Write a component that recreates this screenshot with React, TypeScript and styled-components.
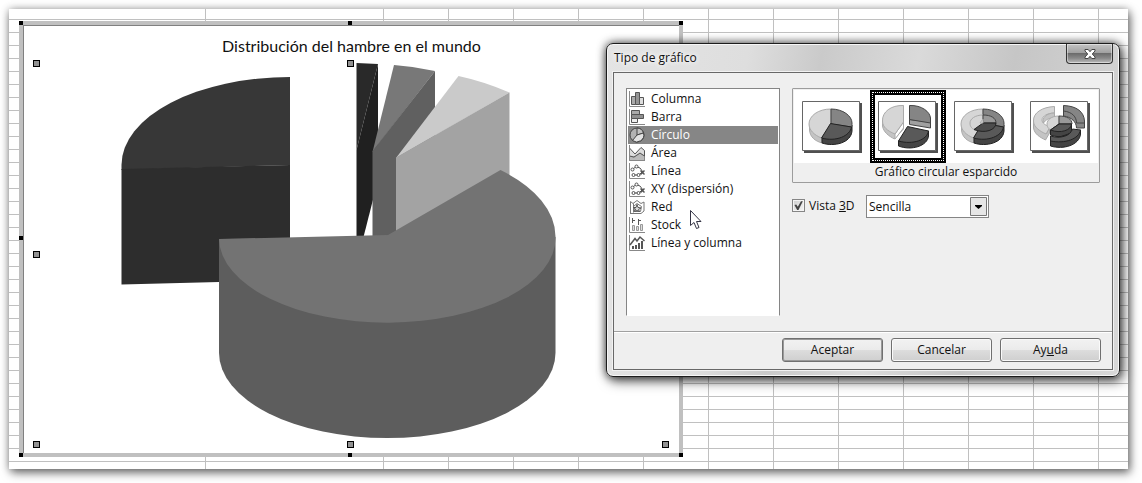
import React, { useState } from "react";
import styled, { createGlobalStyle } from "styled-components";

const Global = createGlobalStyle`
  * { box-sizing: border-box; }
  body {
    margin: 0;
    padding: 9px 14px 14px 9px;
    background: #fff;
    font: 12px/18px "Segoe UI", "Open Sans", "Noto Sans", sans-serif;
    color: #111;
  }
`;

const Sheet = styled.main`
  position: relative;
  height: 460px;
  min-height: calc(100vh - 23px);
  background-color: #fff;
  background-image:
    linear-gradient(90deg, transparent 196px, #c0c0c0 196px, #c0c0c0 197px, transparent 197px),
    repeating-linear-gradient(180deg, transparent 0 10px, #c0c0c0 10px 11px, transparent 11px 13px);
  box-shadow: 0 0 8px rgba(0, 0, 0, 0.3), 2px 4px 9px rgba(0, 0, 0, 0.5);
`;

const Columns = styled.div`
  height: 100%;
  margin-left: 374px;
  background: repeating-linear-gradient(90deg, #c0c0c0 0 1px, transparent 1px 65px);
`;

const ChartObject = styled.section`
  position: absolute;
  left: 10px;
  top: 12px;
  width: 664px;
  height: 436px;
  border: 4px solid #c0c0c0;
  background: #fff;
`;

const ChartBody = styled.div`
  height: 100%;
  border-top: 1px solid #808080;
  border-left: 1px solid #808080;
  overflow: hidden;
`;

const ChartTitle = styled.h1`
  margin: 10px 0 0;
  font: 16px/20px "Comic Sans MS", Lato, sans-serif;
  text-align: center;
`;

const ChartDrawing = styled.svg`
  position: absolute;
  left: -4px;
  top: -4px;
`;

const Dialog = styled.section`
  position: absolute;
  left: 597px;
  top: 34px;
  width: 514px;
  display: flex;
  flex-direction: column;
  padding: 0 6px 6px;
  border: 1px solid #1c1c1c;
  border-radius: 7px;
  background: linear-gradient(100deg, #e4e4e4 0, #dedede 25%, #cacaca 38%, #dadada 55%, #c6c6c6 72%, #d8d8d8 100%);
  box-shadow: inset 0 0 0 1px #f6f6f6, 0 0 10px rgba(0, 0, 0, 0.75), 3px 5px 12px rgba(0, 0, 0, 0.5);
`;

const TitleBar = styled.header`
  display: flex;
  justify-content: space-between;
  align-items: flex-start;
  height: 28px;
  padding-left: 1px;
`;

const DialogTitle = styled.h2`
  margin: 5px 0 0;
  font: inherit;
  text-shadow: 0 0 6px #fff, 0 0 6px #fff;
`;

const CloseButton = styled.button`
  width: 47px;
  height: 20px;
  padding: 0;
  display: flex;
  justify-content: center;
  align-items: center;
  border: 1px solid #333;
  border-top: 0;
  border-radius: 0 0 4px 4px;
  background: linear-gradient(#c4c4c4 0, #a2a2a2 45%, #6c6c6c 50%, #8a8a8a 75%, #bcbcbc 100%);
  box-shadow: inset 0 0 0 1px rgba(255, 255, 255, 0.45);
`;

const Client = styled.div`
  border: 1px solid #686868;
  background: #efefef;
  box-shadow: 0 0 0 1px #f2f2f2;
`;

const Content = styled.div`
  display: flex;
  gap: 12px;
  padding: 15px 12px;
`;

const TypeList = styled.ul`
  width: 154px;
  height: 228px;
  margin: 0;
  padding: 1px;
  list-style: none;
  border: 1px solid #858585;
  border-bottom-color: #fff;
  background: #fff;
`;

const TypeButton = styled.button<{ $on: boolean }>`
  width: 100%;
  height: 18px;
  display: flex;
  align-items: center;
  gap: 6px;
  padding: 0 1px;
  border: 0;
  font: inherit;
  color: ${(p) => (p.$on ? "#fff" : "#111")};
  background: ${(p) => (p.$on ? "#868686" : "transparent")};
`;

const Options = styled.div`
  flex: 1;
  display: flex;
  flex-direction: column;
  gap: 12px;
`;

const Gallery = styled.fieldset`
  margin: 0;
  padding: 1px;
  border: 1px solid #9c9c9c;
  border-radius: 1px;
`;

const Thumbs = styled.div`
  display: flex;
  background: #fff;
`;

const Thumb = styled.button<{ $on: boolean }>`
  flex: none;
  width: 25%;
  height: 73px;
  display: flex;
  justify-content: center;
  align-items: center;
  padding: 0;
  border: ${(p) => (p.$on ? "5px solid #000" : "0")};
  outline: ${(p) => (p.$on ? "1px dotted #fff" : "0")};
  outline-offset: -3px;
  background: #fff;
`;

const Caption = styled.p`
  margin: 0;
  text-align: center;
`;

const ViewRow = styled.div`
  display: flex;
  height: 23px;
`;

const CheckLabel = styled.label`
  display: flex;
  align-items: center;
  gap: 4px;
  width: 74px;
  height: 21px;
`;

const Check = styled.input`
  appearance: none;
  width: 13px;
  height: 13px;
  margin: 0;
  display: grid;
  place-items: center;
  border: 1px solid #858585;
  background: linear-gradient(135deg, #cfcfcf, #f6f6f6);
  box-shadow: inset 0 0 0 1px #f4f4f4;
  &:checked::before {
    content: "";
    width: 9px;
    height: 9px;
    background: #444;
    clip-path: polygon(5% 45%, 25% 40%, 42% 65%, 78% 2%, 98% 2%, 50% 100%, 35% 100%);
  }
`;

const SelectBox = styled.div`
  position: relative;
  width: 123px;
`;

const Select = styled.select`
  appearance: none;
  width: 100%;
  height: 23px;
  padding: 0 20px 0 2px;
  border: 1px solid #858585;
  border-radius: 0;
  background: #fff;
  color: #111;
  font: inherit;
`;

const Arrow = styled.svg`
  position: absolute;
  right: 2px;
  top: 2px;
  pointer-events: none;
`;

const Footer = styled.footer`
  display: flex;
  justify-content: flex-end;
  gap: 8px;
  padding: 6px 11px 7px;
  border-top: 1px solid #a0a0a0;
  box-shadow: inset 0 1px #fff;
`;

const PushButton = styled.button<{ $main?: boolean }>`
  width: 101px;
  height: 24px;
  padding: 0 0 1px;
  border: 1px solid #707070;
  border-radius: 3px;
  background: linear-gradient(#f2f2f2 0, #ebebeb 49%, #dddddd 50%, #cfcfcf 100%);
  box-shadow: inset 0 0 0 1px ${(p) => (p.$main ? "#999" : "#fafafa")};
  color: #111;
  font: inherit;
`;

const Pointer = styled.svg`
  position: absolute;
  left: 680px;
  top: 200px;
  pointer-events: none;
`;

const ink = "#555";

const axis = <path d="M.5 0V15.500H16" fill="none" stroke="#888" />;

const points = (
  <g fill="#fff" stroke={ink}>
    {axis}
    <path d="M3 7L7 3.500L11 5L14 9M5 12H10L14 8" fill="none" />
    <circle cx="3.500" cy="6.500" r="1.500" />
    <circle cx="7.500" cy="3.500" r="1.500" />
    <circle cx="4.500" cy="12" r="1.500" />
    <circle cx="9.500" cy="12" r="1.500" />
    <path d="M11.500 7.500l4 4M15.500 7.500l-4 4" strokeWidth="1.500" />
  </g>
);

const types: { name: string; icon: React.ReactNode }[] = [
  {
    name: "Columna",
    icon: (
      <g stroke={ink} fill="#aaa">
        {axis}
        <path d="M2.500 5.500h4v8h-4z" />
        <path d="M6.500 1.500h4v12h-4z" fill="#959595" />
        <path d="M10.500 6.500h4v7h-4z" fill="#ddd" />
      </g>
    ),
  },
  {
    name: "Barra",
    icon: (
      <g stroke={ink} fill="#aaa">
        {axis}
        <path d="M2.500 1.500h8v4h-8z" />
        <path d="M2.500 5.500h12v4h-12z" fill="#909090" />
        <path d="M2.500 9.500h6v4h-6z" fill="#eee" />
      </g>
    ),
  },
  {
    name: "Círculo",
    icon: (
      <g stroke="#444">
        <circle cx="8" cy="8" r="7" fill="#b2b2b2" />
        <path d="M8 8V1A7 7 0 0 1 14.500 6Z" fill="#c2c2c2" />
        <path d="M8 8L14.500 6A7 7 0 0 1 3.500 13.500Z" fill="#e2e2e2" />
      </g>
    ),
  },
  {
    name: "Área",
    icon: (
      <g stroke={ink}>
        <path d="M.5 11L5 12L11 8L15.500 11V15.500H.5Z" fill="#bbb" stroke="#888" />
        <path d="M.5 3L6 9L12 2.500L15.500 5.500V11L11 8L5 12L.5 11Z" fill="#ddd" />
        {axis}
      </g>
    ),
  },
  { name: "Línea", icon: points },
  { name: "XY (dispersión)", icon: points },
  {
    name: "Red",
    icon: (
      <g stroke="#777" fill="none">
        <path d="M1.500 15V2.500L4 4.500L8 1.500L12 4.500L15 3V12L12 14.500H2" />
        <path d="M4.500 4.500V13.500M8 4.500L12.500 7.500L11.500 12.500H5.500L4.500 7.500Z" />
        <path d="M8 5.500L9 8.500L12 9L9.500 10.500L10.500 12.500L8 11.500L5.500 12.500L6.500 10L4.500 8.500L7 8.500Z" fill="#ddd" stroke={ink} />
      </g>
    ),
  },
  {
    name: "Stock",
    icon: (
      <g stroke={ink} fill="#ddd">
        {axis}
        <path d="M3.500 1v5M3.500 3.500H6M9.500 2v6M9.500 3.500H12" fill="none" />
        <path d="M3.500 8.500h2v5h-2zM7.500 9.500h2v4h-2zM11.500 7.500h2v6h-2z" stroke="#999" />
      </g>
    ),
  },
  {
    name: "Línea y columna",
    icon: (
      <g stroke={ink} fill="none">
        {axis}
        <path d="M1 10L6 3.500L8 6L11 2L15.500 6" strokeWidth="1.500" />
        <path d="M4 14v-3M7 14v-4M10 14V8M13 14V6" strokeWidth="2" />
      </g>
    ),
  },
];

const light = { fill: "#d6d6d6", stroke: "#aaa" };
const lightSide = { fill: "#c4c4c4", stroke: "#aaa" };
const mid = { fill: "#858585", stroke: "#444" };
const dark = { fill: "#595959", stroke: "#222" };
const darkSide = { fill: "#444", stroke: "#222" };

const variants: { name: string; art: React.ReactNode }[] = [
  {
    name: "Gráfico circular",
    art: (
      <>
        <path {...lightSide} d="M7.500 23v6C8 36 13 40 20 42v-7Z" />
        <path {...darkSide} d="M20 35v7c12 4 29 0 30-12v-6Z" />
        <path {...light} d="M29 23V8C16 8 7 15 7 23c0 6 5 11 12.500 14Z" />
        <path {...mid} d="M29 23V8C41 8 50 15 50 22c0 2 0 3-.5 4Z" />
        <path {...dark} d="M28.500 22.500L49.500 26C48 35 34 41 19.500 37Z" />
      </>
    ),
  },
  {
    name: "Gráfico circular esparcido",
    art: (
      <>
        <path {...lightSide} d="M4.500 20v5c1 6 6 10 12 13l9-10V5Z" />
        <path d="M17 38V33L25.500 21v6Z" fill="#fff" stroke="#aaa" />
        <path {...light} d="M25.500 4.500C13 4 4 11 4.500 20c0 6 5 10 12.500 13l8.500-12Z" />
        <path {...mid} fill="#a0a0a0" d="M31.500 18.500v5l21 3.500v-6Z" />
        <path {...mid} d="M31.500 4.500C44 4 52 11 52.500 17v5l-21-3.500Z" />
        <path {...darkSide} d="M20.500 40v5c13 5 29 0 30-10v-5Z" />
        <path {...dark} d="M29.500 25.500l21 4.500C49 39 35 44 20.500 40Z" />
      </>
    ),
  },
  {
    name: "Gráfico de rosquilla",
    art: (
      <>
        <path {...lightSide} d="M7.500 23v6C8 36 13 40 20 42v-7Z" />
        <path {...darkSide} d="M20 35v7c12 4 29 0 30-12v-6Z" />
        <path {...light} d="M29 22V8C16 8 7 15 7 23c0 6 5 11 12.500 14Z" />
        <path {...mid} d="M29 22V8C41 8 50 15 50 22c0 2 0 3-.5 4Z" />
        <path {...dark} d="M28.500 22L49.500 26C48 35 34 41 19.500 37Z" />
        <path {...light} d="M29 22v-8c-8 0-13 4-13 8 0 4 2 6 7 8Z" />
        <path {...mid} fill="#999" d="M29 22v-8c8 0 13 3 13 8Z" />
        <path {...darkSide} fill="#4c4c4c" d="M29 22h13c0 7-11 11-22 6.500Z" />
        <path {...lightSide} fill="#ddd" d="M26 22l3-4v4Z" />
      </>
    ),
  },
  {
    name: "Rosquilla esparcida",
    art: (
      <>
        <path {...lightSide} d="M3.500 20v7c1 6 6 9 12 12l4-7v-6l-3 7Z" />
        <path {...light} d="M24.500 5.500C12 6 3 12 3.500 20c0 6 6 10 12.500 13l4-7c-5-2-8-4-8-7 0-4 6-7 12.500-7Z" />
        <path {...lightSide} d="M24.500 12v5c-6 0-9 2-11 5c-2-5 3-10 11-10Z" />
        <path {...light} d="M29 15c-8 0-12 4-12 8s3 6 6 7l6-6Z" />
        <path {...mid} fill="#999" d="M29 15c8 0 13 3 13 8l-13 2Z" />
        <path {...darkSide} d="M20.500 29v5c10 4 21 0 21-5v-6H29Z" />
        <path {...dark} d="M29 23h12.500c0 6-11 10-21 6Z" />
        <path {...mid} d="M33.500 4.500C47 5 54 11 54.500 20v7h-8c0-6-5-11-13-12Z" />
        <path {...mid} fill="none" d="M33.500 10c9 1 13 6 13 12h8" />
        <path {...darkSide} d="M20.500 39v6c13 4 29-1 30-12v-4Z" />
        <path {...dark} d="M20.500 35c10 3 20 0 22-7l8 1C49 38 35 43 20.500 40Z" />
      </>
    ),
  },
];

const frameHandles = [
  [19, 21], [348, 21], [679, 21],
  [19, 236], [679, 236],
  [19, 453], [348, 453], [679, 453],
];
const plotHandles = [
  [33, 60], [347, 60], [33, 251], [33, 441], [347, 441], [662, 441],
];

const PieChart = () => (
  <ChartDrawing width="664" height="436" viewBox="19 21 664 436" role="img" aria-label="Distribución del hambre en el mundo">
    <path fill="#373737" d="M290 165V77A168.500 88 0 0 0 121.500 165V170Z" />
    <path fill="#2d2d2d" d="M121.500 169L290 165V260L219 282L121.500 284.500Z" />
    <path fill="#292929" d="M356.500 63L378 64L356.500 150Z" />
    <path fill="#202020" d="M378 64V180L363.500 237H356.500V150Z" />
    <path fill="#787878" d="M394 65Q415 66.500 435 71L372.500 152Z" />
    <path fill="#606060" d="M435 71V160L396 237H372.500V151Z" />
    <path fill="#cacaca" d="M458.500 76Q484 81.500 509.500 92.500L396 158Z" />
    <path fill="#a3a3a3" d="M509.500 92.500V200L396 237V157.500Z" />
    <path fill="#5d5d5d" d="M219 239V353A168 85 0 0 0 555.500 353V237Z" />
    <path fill="#737373" d="M219 239L388 235L500.500 170A168.500 90 0 0 1 555.500 237A168 84.500 0 0 1 219 239Z" />
    <g shapeRendering="crispEdges">
      {frameHandles.map(([x, y]) => (
        <rect key={`${x}-${y}`} x={x} y={y} width="4" height="4" />
      ))}
      {plotHandles.map(([x, y]) => (
        <g key={`${x}-${y}`}>
          <rect x={x} y={y} width="7" height="7" />
          <rect x={x + 1} y={y + 1} width="5" height="5" fill="#929292" />
        </g>
      ))}
    </g>
  </ChartDrawing>
);

export default function App() {
  const [type, setType] = useState(2);
  const [variant, setVariant] = useState(1);
  return (
    <>
      <Global />
      <Sheet>
        <Columns />
        <ChartObject>
          <ChartBody>
            <ChartTitle>Distribución del hambre en el mundo</ChartTitle>
          </ChartBody>
          <PieChart />
        </ChartObject>
        <Dialog role="dialog" aria-labelledby="dialog-title">
          <TitleBar>
            <DialogTitle id="dialog-title">Tipo de gráfico</DialogTitle>
            <CloseButton aria-label="Cerrar">
              <svg width="12" height="10" viewBox="0 0 12 10">
                <path d="M1 .5h3.200L6 2.700L7.800.5H11v1.500L8.300 5L11 8v1.500H7.800L6 7.300L4.200 9.500H1V8L3.700 5L1 2Z" fill="#fff" stroke="#444" />
              </svg>
            </CloseButton>
          </TitleBar>
          <Client>
            <Content>
              <TypeList>
                {types.map((t, i) => (
                  <li key={t.name}>
                    <TypeButton $on={i === type} onClick={() => setType(i)}>
                      <svg width="16" height="16" viewBox="0 0 16 16">{t.icon}</svg>
                      {t.name}
                    </TypeButton>
                  </li>
                ))}
              </TypeList>
              <Options>
                <Gallery>
                  <Thumbs>
                    {variants.map((v, i) => (
                      <Thumb key={v.name} $on={i === variant} aria-label={v.name} onClick={() => setVariant(i)}>
                        <svg width="60" height="52" viewBox="0 0 60 52">
                          <path d="M2 2h58v50H2z" fill="#505050" />
                          <path d="M.5.5h57v49H.5z" fill="#fff" stroke="#666" />
                          {v.art}
                        </svg>
                      </Thumb>
                    ))}
                  </Thumbs>
                  <Caption>{variants[variant].name}</Caption>
                </Gallery>
                <ViewRow>
                  <CheckLabel>
                    <Check type="checkbox" defaultChecked />
                    <span>Vista <u>3</u>D</span>
                  </CheckLabel>
                  <SelectBox>
                    <Select aria-label="Esquema 3D" defaultValue="Sencilla">
                      <option>Sencilla</option>
                      <option>Realista</option>
                    </Select>
                    <Arrow width="17" height="19" viewBox="0 0 17 19">
                      <path d="M.5.5h16v18H.5z" fill="#e6e6e6" stroke="#777" />
                      <path d="M5 8h7v1L8.500 12L5 9Z" />
                    </Arrow>
                  </SelectBox>
                </ViewRow>
              </Options>
            </Content>
            <Footer>
              <PushButton $main>Aceptar</PushButton>
              <PushButton>Cancelar</PushButton>
              <PushButton>Ay<u>u</u>da</PushButton>
            </Footer>
          </Client>
        </Dialog>
        <Pointer width="14" height="21" viewBox="0 0 14 21">
          <path d="M1.500 1.500V16.500L5 13.500L7.500 19.500L10 18.500L7.500 12.500H12Z" fill="#fff" stroke="#334" />
        </Pointer>
      </Sheet>
    </>
  );
}
